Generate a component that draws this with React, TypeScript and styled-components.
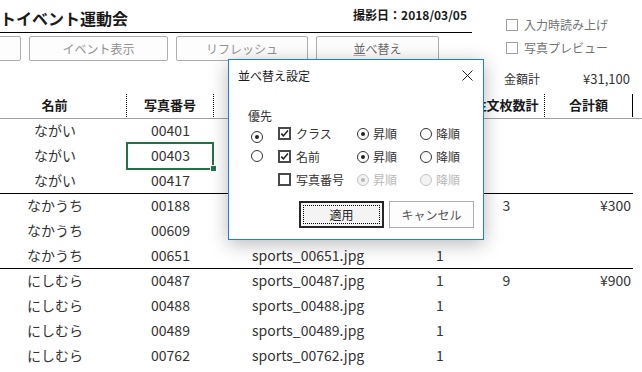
import styled, { createGlobalStyle } from 'styled-components';

const GlobalStyle = createGlobalStyle`
  html, body {
    margin: 0;
    padding: 0;
    background: #fff;
  }
  body {
    font-family: "Noto Sans CJK JP", "Noto Sans", sans-serif;
    color: #333;
  }
  * {
    box-sizing: border-box;
  }
`;

const Screen = styled.div`
  position: relative;
  width: 642px;
  height: 372px;
  overflow: hidden;
  background: #fff;
`;

const Top = styled.div`
  display: flex;
`;

const LeftPane = styled.div`
  width: 472px;
  flex: none;
`;

const TitleBar = styled.div`
  height: 33px;
  display: flex;
  justify-content: space-between;
  padding-right: 5px;
  border-bottom: 1px solid #000;
`;

const Title = styled.h1`
  margin: 8px 0 0;
  font-size: 16px;
  line-height: 20px;
  font-weight: 700;
  color: #1a1a1a;
  white-space: nowrap;
`;

const ShotDate = styled.div`
  margin-top: 7px;
  font-size: 12px;
  line-height: 16px;
  font-weight: 700;
  color: #1a1a1a;
`;

const ButtonBar = styled.div`
  display: flex;
  gap: 8px;
  margin: 3px 0 0 -118px;
`;

const ToolButton = styled.button<{ $w: number; $active?: boolean }>`
  width: ${(p) => p.$w}px;
  height: 25px;
  flex: none;
  border: 1px solid #adadad;
  border-radius: 2px;
  background: #fdfdfd;
  font-family: inherit;
  font-size: 12px;
  color: ${(p) => (p.$active ? '#6a6a6a' : '#929292')};
  padding: 0;

  u {
    text-decoration-color: #b0b0b0;
  }
`;

const RightPane = styled.div`
  padding: 13px 0 0 34px;
  display: flex;
  flex-direction: column;
`;

const Option = styled.label`
  display: flex;
  align-items: center;
  gap: 6px;
  height: 23px;
  font-size: 12px;
  color: #727272;
`;

const OptionBox = styled.span`
  width: 12px;
  height: 12px;
  border: 1px solid #9e9e9e;
  background: #fff;
  flex: none;
`;

const Summary = styled.div`
  display: flex;
  justify-content: flex-end;
  align-items: center;
  gap: 43px;
  height: 18px;
  margin-top: 8px;
  padding-right: 12px;
  font-size: 12px;
  color: #333;
`;

const Amount = styled.span`
  font-size: 13px;
`;

const COLS = '144px 87px 198px 56px 77px 88px';

const Table = styled.div`
  margin: 6px 0 0 -17px;
  width: 659px;
`;

const HeaderRow = styled.div`
  display: grid;
  grid-template-columns: ${COLS} 1fr;
  height: 26px;
  border-bottom: 1px solid #a0a0a0;
`;

const HeaderCell = styled.div<{ $edge?: 'dotted' | 'solid' | 'none' }>`
  display: flex;
  align-items: center;
  justify-content: center;
  margin: 1px 0;
  padding-bottom: 2px;
  font-size: 13px;
  font-weight: 700;
  color: #1a1a1a;
  white-space: nowrap;
  border-right: ${(p) =>
    p.$edge === 'none' ? 'none' : p.$edge === 'solid' ? '1px solid #000' : '1px dotted #000'};
`;

const Group = styled.div`
  width: 650px;
  border-bottom: 1px solid #000;
`;

const Row = styled.div`
  display: grid;
  grid-template-columns: ${COLS};
  height: 25px;

  &:last-child {
    height: 24px;
  }
`;

const Cell = styled.div<{ $align?: 'left' | 'center' | 'right'; $selected?: boolean }>`
  position: relative;
  display: flex;
  align-items: center;
  justify-content: ${(p) =>
    p.$align === 'left' ? 'flex-start' : p.$align === 'right' ? 'flex-end' : 'center'};
  padding: ${(p) =>
    p.$align === 'left' ? '0 0 3px 38px' : p.$align === 'right' ? '0 2px 3px 0' : '0 0 3px 0'};
  font-size: 14px;
  color: #333;
  white-space: nowrap;

  ${(p) =>
    p.$selected &&
    `
    &::after {
      content: '';
      position: absolute;
      left: -1px;
      right: 0;
      top: -2px;
      bottom: -1px;
      border: 2px solid #217346;
    }
    &::before {
      content: '';
      position: absolute;
      right: -3px;
      bottom: -3px;
      width: 5px;
      height: 5px;
      background: #217346;
      border: 1px solid #fff;
      z-index: 1;
    }
  `}
`;

const Dialog = styled.div`
  position: absolute;
  left: 228px;
  top: 59px;
  width: 256px;
  height: 181px;
  display: flex;
  flex-direction: column;
  background: #fff;
  border: 1px solid #1883d7;
  box-shadow: 0 4px 18px rgba(0, 0, 0, 0.28);
`;

const DialogTitle = styled.div`
  height: 30px;
  display: flex;
  align-items: center;
  justify-content: space-between;
  padding: 0 10px 0 9px;
  font-size: 12px;
  color: #1a1a1a;
`;

const DialogBody = styled.div`
  padding: 19px 9px 10px 19px;
  font-size: 12px;
  color: #333;
`;

const Priority = styled.div`
  line-height: 13px;
  height: 13px;
`;

const SortGrid = styled.div`
  display: grid;
  grid-template-columns: 27px 79px 63px auto;
  grid-auto-rows: 23px;
  align-items: center;
  margin-left: 3px;
`;

const Choice = styled.span<{ $disabled?: boolean }>`
  display: flex;
  align-items: center;
  gap: 4px;
  white-space: nowrap;
  color: ${(p) => (p.$disabled ? '#b8b8b8' : '#333')};
`;

const CheckChoice = styled(Choice)`
  gap: 5px;
`;

const Radio = styled.span<{ $checked?: boolean; $disabled?: boolean }>`
  width: 12px;
  height: 12px;
  flex: none;
  border-radius: 50%;
  border: 1.5px solid ${(p) => (p.$disabled ? '#c4c4c4' : '#333')};
  background: ${(p) => (p.$disabled ? '#f2f2f2' : '#fff')};
  display: inline-flex;
  align-items: center;
  justify-content: center;

  &::after {
    content: '';
    width: 4px;
    height: 4px;
    border-radius: 50%;
    background: ${(p) => (p.$disabled ? '#b8b8b8' : '#222')};
    display: ${(p) => (p.$checked ? 'block' : 'none')};
  }
`;

const CheckBox = styled.span`
  width: 13px;
  height: 13px;
  flex: none;
  border: 2px solid #4a4a4a;
  background: #fff;
  display: inline-flex;
  align-items: center;
  justify-content: center;
`;

const DialogFooter = styled.div`
  display: flex;
  justify-content: flex-end;
  gap: 5px;
  margin-top: 10px;
`;

const DialogButton = styled.button<{ $default?: boolean }>`
  position: relative;
  width: 85px;
  height: 27px;
  padding: 0;
  font-family: inherit;
  font-size: 12px;
  color: ${(p) => (p.$default ? '#222' : '#555')};
  background: ${(p) => (p.$default ? '#f4f4f4' : '#fdfdfd')};
  border: ${(p) => (p.$default ? '2px solid #262626' : '1px solid #adadad')};

  ${(p) =>
    p.$default &&
    `
    &::after {
      content: '';
      position: absolute;
      inset: 2px;
      border: 1px dotted #000;
    }
  `}
`;

const Check = () => (
  <svg width="9" height="9" viewBox="0 0 9 9">
    <path d="M1.3 4.6 L3.4 6.9 L7.9 1.6" fill="none" stroke="#222" strokeWidth="1.6" />
  </svg>
);

const CloseIcon = () => (
  <svg width="11" height="11" viewBox="0 0 11 11">
    <path d="M0.5 0.5 L10.5 10.5 M10.5 0.5 L0.5 10.5" stroke="#222" strokeWidth="1" />
  </svg>
);

type Group = { name: string; photos: string[]; count: string; total: string };

const groups: Group[] = [
  { name: 'ながい', photos: ['00401', '00403', '00417'], count: '', total: '' },
  { name: 'なかうち', photos: ['00188', '00609', '00651'], count: '3', total: '¥300' },
  {
    name: 'にしむら',
    photos: ['00487', '00488', '00489', '00762', '00763', '00770'],
    count: '9',
    total: '¥900',
  },
];

const sortRows = [
  { label: 'クラス', priority: true, checked: true, asc: true, disabled: false, showPriority: true },
  { label: '名前', priority: false, checked: true, asc: true, disabled: false, showPriority: true },
  { label: '写真番号', priority: false, checked: false, asc: true, disabled: true, showPriority: false },
];

const App = () => (
  <Screen>
    <GlobalStyle />
    <Top>
      <LeftPane>
        <TitleBar>
          <Title>トイベント運動会</Title>
          <ShotDate>撮影日：2018/03/05</ShotDate>
        </TitleBar>
        <ButtonBar>
          <ToolButton $w={139}>イベント選択</ToolButton>
          <ToolButton $w={139}>イベント表示</ToolButton>
          <ToolButton $w={132}>リフレッシュ</ToolButton>
          <ToolButton $w={123} $active>
            <u>並</u>べ替え
          </ToolButton>
        </ButtonBar>
      </LeftPane>
      <RightPane>
        <Option>
          <OptionBox />
          入力時読み上げ
        </Option>
        <Option>
          <OptionBox />
          写真プレビュー
        </Option>
      </RightPane>
    </Top>

    <Summary>
      <span>金額計</span>
      <Amount>¥31,100</Amount>
    </Summary>

    <Table>
      <HeaderRow>
        <HeaderCell>名前</HeaderCell>
        <HeaderCell>写真番号</HeaderCell>
        <HeaderCell>ファイル名</HeaderCell>
        <HeaderCell>枚数</HeaderCell>
        <HeaderCell>注文枚数計</HeaderCell>
        <HeaderCell $edge="solid">合計額</HeaderCell>
        <HeaderCell $edge="none" />
      </HeaderRow>
      {groups.map((g) => (
        <Group key={g.name}>
          {g.photos.map((no, i) => (
            <Row key={no}>
              <Cell>{g.name}</Cell>
              <Cell $selected={no === '00403'}>{no}</Cell>
              <Cell $align="left">sports_{no}.jpg</Cell>
              <Cell>1</Cell>
              <Cell>{i === 0 ? g.count : ''}</Cell>
              <Cell $align="right">{i === 0 ? g.total : ''}</Cell>
            </Row>
          ))}
        </Group>
      ))}
    </Table>

    <Dialog>
      <DialogTitle>
        <span>並べ替え設定</span>
        <CloseIcon />
      </DialogTitle>
      <DialogBody>
        <Priority>優先</Priority>
        <SortGrid>
          {sortRows.map((r) => (
            <>
              <span key={r.label + 'p'}>{r.showPriority && <Radio $checked={r.priority} />}</span>
              <CheckChoice key={r.label + 'c'}>
                <CheckBox>{r.checked && <Check />}</CheckBox>
                {r.label}
              </CheckChoice>
              <Choice key={r.label + 'a'} $disabled={r.disabled}>
                <Radio $checked={r.asc} $disabled={r.disabled} />
                昇順
              </Choice>
              <Choice key={r.label + 'd'} $disabled={r.disabled}>
                <Radio $checked={!r.asc} $disabled={r.disabled} />
                降順
              </Choice>
            </>
          ))}
        </SortGrid>
        <DialogFooter>
          <DialogButton $default>適用</DialogButton>
          <DialogButton>キャンセル</DialogButton>
        </DialogFooter>
      </DialogBody>
    </Dialog>
  </Screen>
);

export default App;
